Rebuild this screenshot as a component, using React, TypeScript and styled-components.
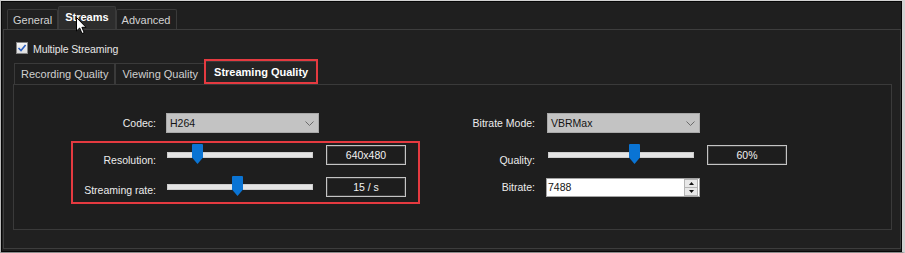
import React from "react";
import styled, { createGlobalStyle } from "styled-components";

const GlobalStyle = createGlobalStyle`
  html, body {
    margin: 0;
    padding: 0;
    background: #1f1f1f;
  }
  * {
    box-sizing: border-box;
  }
`;

const App: React.FC = () => {
  return (
    <>
      <GlobalStyle />
      <Window>
        <Frame>
          <TabStrip>
            <Tab>General</Tab>
            <Tab $active>Streams</Tab>
            <Tab>Advanced</Tab>
          </TabStrip>
          <Panel>
            <CheckRow>
              <CheckBox>
                <svg width="10" height="10" viewBox="0 0 10 10">
                  <path d="M1.5 5 L4 7.6 L8.6 2" fill="none" stroke="#2c5fbf" strokeWidth="1.6" />
                </svg>
              </CheckBox>
              <CheckLabel>Multiple Streaming</CheckLabel>
            </CheckRow>
            <SubTabStrip>
              <SubTab>Recording Quality</SubTab>
              <SubTab>Viewing Quality</SubTab>
              <SubTab $active>Streaming Quality</SubTab>
            </SubTabStrip>
            <InnerPanel>
              <Form>
                <Column>
                  <Row $label={100} $space={10}>
                    <Label>Codec:</Label>
                    <Combo value="H264" />
                  </Row>
                  <Highlight>
                    <Row $label={100} $space={10}>
                      <Label $drop={5}>Resolution:</Label>
                      <Slider value={0.185} />
                      <ValueBox>640x480</ValueBox>
                    </Row>
                    <Row $label={100} $space={10}>
                      <Label $drop={3}>Streaming rate:</Label>
                      <Slider value={0.48} />
                      <ValueBox>15 / s</ValueBox>
                    </Row>
                  </Highlight>
                </Column>
                <Column>
                  <Row $label={112} $space={12}>
                    <Label>Bitrate Mode:</Label>
                    <Combo value="VBRMax" />
                  </Row>
                  <Row $label={112} $space={12} $gap={11}>
                    <Label $drop={5}>Quality:</Label>
                    <Slider value={0.6} />
                    <ValueBox>60%</ValueBox>
                  </Row>
                  <Row $label={112} $space={12} $gap={13}>
                    <Label>Bitrate:</Label>
                    <SpinBox>
                      <SpinText>7488</SpinText>
                      <SpinButtons>
                        <SpinButton>
                          <svg width="5" height="3" viewBox="0 0 5 3">
                            <path d="M0 3 L2.5 0 L5 3 Z" fill="#111" />
                          </svg>
                        </SpinButton>
                        <SpinButton>
                          <svg width="5" height="3" viewBox="0 0 5 3">
                            <path d="M0 0 L2.5 3 L5 0 Z" fill="#111" />
                          </svg>
                        </SpinButton>
                      </SpinButtons>
                    </SpinBox>
                  </Row>
                </Column>
              </Form>
            </InnerPanel>
          </Panel>
        </Frame>
        <Cursor width="12" height="18" viewBox="0 0 12 18">
          <path
            d="M0.5 0.5 L0.5 14 L3.7 11 L6 16.5 L8.2 15.6 L5.9 10.3 L10 10.3 Z"
            fill="#fff"
            stroke="#000"
            strokeWidth="1"
            strokeLinejoin="round"
          />
        </Cursor>
      </Window>
    </>
  );
};

const Combo: React.FC<{ value: string }> = ({ value }) => (
  <ComboBox>
    <span>{value}</span>
    <svg width="9" height="5" viewBox="0 0 9 5">
      <path d="M0.5 0.5 L4.5 4.5 L8.5 0.5" fill="none" stroke="#6b6b6b" strokeWidth="1" />
    </svg>
  </ComboBox>
);

const THUMB = 11;
const TRACK = 146;

const Slider: React.FC<{ value: number }> = ({ value }) => (
  <SliderTrack>
    <svg
      width={THUMB}
      height="20"
      viewBox="0 0 11 20"
      style={{ left: Math.round(value * (TRACK - THUMB)) }}
    >
      <path d="M0 1 Q0 0 1 0 H10 Q11 0 11 1 V13.5 L5.5 20 L0 13.5 Z" fill="#0a74d4" />
    </svg>
  </SliderTrack>
);

const Window = styled.div`
  position: relative;
  width: 905px;
  height: 253px;
  border-top: 1px solid #d2d2d2;
  border-left: 1px solid #b9b9b9;
  border-right: 3px solid #d2d2d2;
  border-bottom: 1px solid #8c8c8c;
  font-family: "Liberation Sans", Arial, sans-serif;
`;

const Frame = styled.div`
  height: 100%;
  border: 1px solid #060606;
  background: #1f1f1f;
  display: flex;
  flex-direction: column;
`;

const TabStrip = styled.div`
  display: flex;
  align-items: flex-end;
  height: 27px;
  padding-left: 5px;
`;

const Tab = styled.div<{ $active?: boolean }>`
  height: ${(p) => (p.$active ? 23 : 20)}px;
  padding: ${(p) => (p.$active ? "0 6px 3px" : "0 5px")};
  display: flex;
  align-items: center;
  border: 1px solid #3a3a3a;
  border-bottom: none;
  border-radius: 2px 2px 0 0;
  background: ${(p) => (p.$active ? "#2d2d2d" : "#202020")};
  color: ${(p) => (p.$active ? "#ffffff" : "#d2d2d2")};
  font-size: 11px;
  font-weight: ${(p) => (p.$active ? 700 : 400)};
  white-space: nowrap;
`;

const Panel = styled.div`
  flex: 1;
  margin: 0 0 2px 1px;
  border: 1px solid #3d3d3d;
  background: #202020;
  display: flex;
  flex-direction: column;
`;

const CheckRow = styled.div`
  display: flex;
  align-items: center;
  gap: 5px;
  height: 12px;
  margin: 12px 0 0 12px;
`;

const CheckBox = styled.div`
  width: 12px;
  height: 12px;
  border: 1px solid #858585;
  background: linear-gradient(#f6f6f6, #dedede);
  display: flex;
  align-items: center;
  justify-content: center;
`;

const CheckLabel = styled.span`
  color: #e6e6e6;
  font-size: 10.5px;
  letter-spacing: -0.1px;
  padding-top: 1px;
`;

const SubTabStrip = styled.div`
  display: flex;
  align-items: flex-end;
  height: 23px;
  margin: 7px 0 0 10px;
`;

const SubTab = styled.div<{ $active?: boolean }>`
  position: relative;
  height: ${(p) => (p.$active ? 23 : 21)}px;
  padding: ${(p) => (p.$active ? "0 8px 2px" : "0 6px")};
  display: flex;
  align-items: center;
  border: 1px solid #3a3a3a;
  border-bottom: none;
  background: ${(p) => (p.$active ? "#242424" : "#1f1f1f")};
  color: ${(p) => (p.$active ? "#ffffff" : "#d0d0d0")};
  font-size: 11px;
  font-weight: ${(p) => (p.$active ? 700 : 400)};
  white-space: nowrap;

  ${(p) =>
    p.$active &&
    `
    &::after {
      content: "";
      position: absolute;
      top: -3px;
      left: -2px;
      right: -2px;
      bottom: 0;
      border: 2px solid #e53a40;
    }
  `}
`;

const InnerPanel = styled.div`
  flex: 1;
  margin: 0 8px 18px 9px;
  border: 1px solid #3a3a3a;
  background: #1e1e1e;
`;

const Form = styled.div`
  display: flex;
  gap: 28px;
  padding: 28px 0 0 52px;
`;

const Column = styled.div`
  display: flex;
  flex-direction: column;
`;

const Highlight = styled.div`
  position: relative;
  display: flex;
  flex-direction: column;
  gap: 13px;
  margin-top: 11px;

  &::after {
    content: "";
    position: absolute;
    top: -3px;
    left: 5px;
    right: -13px;
    bottom: -7px;
    border: 2px solid #e53a40;
  }
`;

const Label = styled.div<{ $drop?: number }>`
  text-align: right;
  margin-top: ${(p) => (p.$drop ?? 0) * 2}px;
  color: #ececec;
  font-size: 10.5px;
  line-height: 12px;
  white-space: nowrap;
`;

const Row = styled.div<{ $label: number; $space: number; $gap?: number }>`
  display: grid;
  grid-template-columns: ${(p) => p.$label}px 160px 81px;
  align-items: center;
  height: 20px;
  margin-top: ${(p) => p.$gap ?? 0}px;

  & > ${Label} {
    padding-right: ${(p) => p.$space}px;
  }
`;

const ComboBox = styled.div`
  width: 153px;
  height: 20px;
  padding: 0 4px 0 3px;
  display: flex;
  align-items: center;
  justify-content: space-between;
  background: #c3c3c3;
  border: 1px solid #a9a9a9;
  color: #141414;
  font-size: 10.5px;
`;

const SliderTrack = styled.div`
  position: relative;
  width: 146px;
  height: 20px;
  margin-left: 1px;

  &::before {
    content: "";
    position: absolute;
    left: 0;
    right: 0;
    top: 7px;
    height: 4px;
    background: #e4e4e4;
    border: 1px solid #cdcdcd;
  }

  svg {
    position: absolute;
    top: -1px;
  }
`;

const ValueBox = styled.div`
  width: 80px;
  height: 20px;
  display: flex;
  align-items: center;
  justify-content: center;
  border: 1px solid #c4c4c4;
  box-shadow: inset 0 0 0 1px #3c3c3c;
  background: #1d1d1d;
  color: #f2f2f2;
  font-size: 10.5px;
`;

const SpinBox = styled.div`
  width: 154px;
  height: 19px;
  margin-left: -1px;
  display: flex;
  background: #ffffff;
  border: 1px solid #a3a3a3;
`;

const SpinText = styled.div`
  flex: 1;
  display: flex;
  align-items: center;
  padding-left: 1px;
  color: #141414;
  font-size: 10.5px;
`;

const SpinButtons = styled.div`
  width: 14px;
  margin: 0 1px 0 0;
  display: flex;
  flex-direction: column;
`;

const SpinButton = styled.div`
  flex: 1;
  display: flex;
  align-items: center;
  justify-content: center;
  background: #e8e8e8;
  border: 1px solid #b5b5b5;

  & + & {
    border-top: none;
  }
`;

const Cursor = styled.svg`
  position: absolute;
  left: 75px;
  top: 16px;
`;

export default App;
